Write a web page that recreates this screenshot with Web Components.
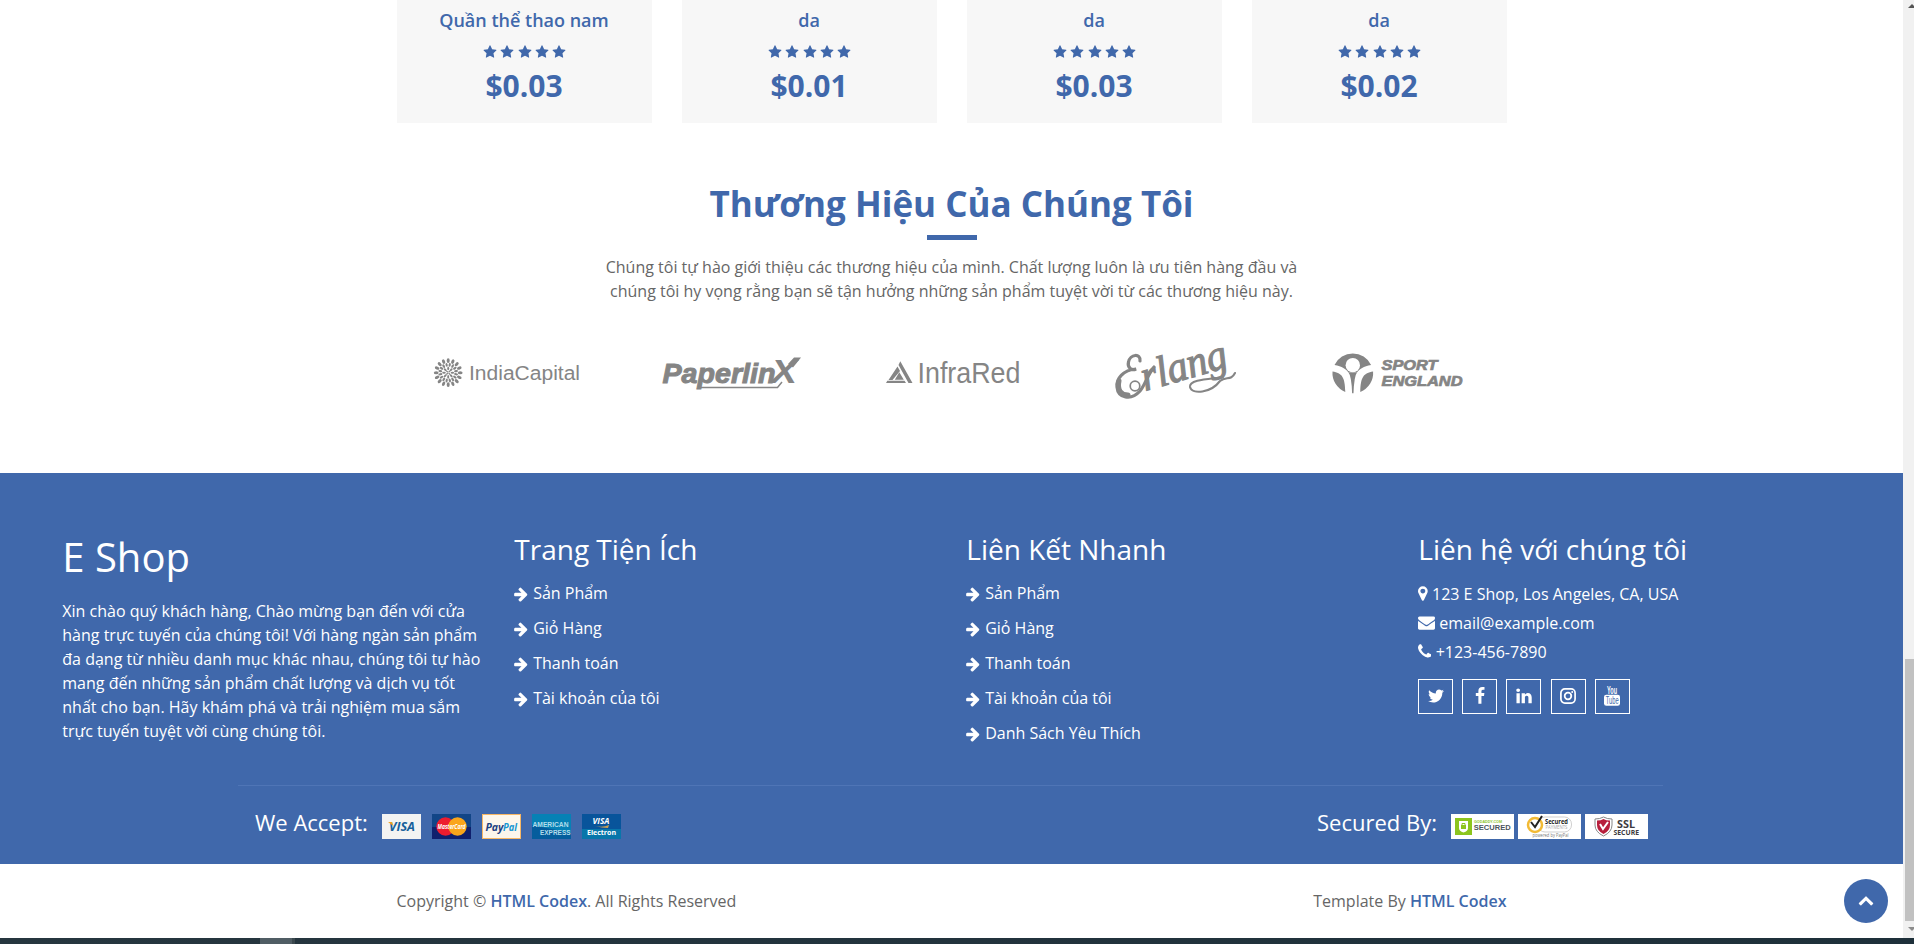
<!DOCTYPE html>
<html lang="vi">
<head>
<meta charset="utf-8">
<title>E Shop</title>
<style>
html,body{margin:0;height:944px;overflow:hidden;background:#fff}
body{font:400 16px/24px "Open Sans",sans-serif;color:#666;--blue:#4068ab}
</style>
</head>
<body>
<shop-window></shop-window>
<script>
const define=(name,html)=>customElements.define(name,class extends HTMLElement{
  connectedCallback(){
    if(this.shadowRoot)return;
    const root=this.attachShadow({mode:'open'});
    root.innerHTML=typeof html==='function'?html(this):html;
  }
});

const ICONS={
star:'M1728 647q0 22-26 48l-363 354 86 500q1 7 1 20 0 21-10.5 35.5t-30.500 14.500q-19 0-40-12l-449-236-449 236q-22 12-40 12-21 0-31.500-14.500t-10.500-35.500q0-6 2-20l86-500-364-354q-25-27-25-48 0-37 56-46l502-73 225-455q19-41 49-41t49 41l225 455 502 73q56 9 56 46z',
arrow:'M1664 960q0 54-37 91l-651 651q-39 37-91 37-51 0-90-37l-75-75q-38-38-38-91t38-91l293-293h-704q-52 0-84.500-37.500t-32.500-90.500v-128q0-53 32.500-90.500t84.500-37.500h704l-293-294q-38-36-38-90t38-90l75-75q38-38 90-38 53 0 91 38l651 651q37 35 37 90z',
marker:'M1152 640q0-106-75-181t-181-75-181 75-75 181 75 181 181 75 181-75 75-181zm256 0q0 109-33 179l-364 774q-16 33-47.500 52t-67.500 19-67.500-19-46.500-52l-365-774q-33-70-33-179 0-212 150-362t362-150 362 150 150 362z',
envelope:'M1792 710v794q0 66-47 113t-113 47h-1472q-66 0-113-47t-47-113v-794q44 49 101 87 362 246 497 345 57 42 92.500 65.500t94.500 48 110 24.500h2q51 0 110-24.500t94.500-48 92.500-65.500q170-123 498-345 57-39 100-87zm0-294q0 79-49 151t-122 123q-376 261-468 325-10 7-42.500 31t-54 38.500-52 32.500-57.500 27-50 9h-2q-23 0-50-9t-57.500-27-52-32.500-54-38.500-42.500-31q-91-64-262-182.500t-205-142.500q-62-42-117-115.500t-55-136.500q0-78 41.500-130t118.500-52h1472q65 0 112.500 47t47.500 113z',
phone:'M1600 1240q0 27-10 70.500t-21 68.500q-21 50-122 106-94 51-186 51-27 0-53-3.500t-57.500-12.500-47-14.500-55.500-20.500-49-18q-98-35-175-83-127-79-264-216t-216-264q-48-77-83-175-3-9-18-49t-20.500-55.500-14.500-47-12.500-57.500-3.500-53q0-92 51-186 56-101 106-122 25-11 68.500-21t70.500-10q14 0 21 3 18 6 53 76 11 19 30 54t35 63.500 31 53.500q3 4 17.500 25t21.500 35.500 7 28.500q0 20-28.500 50t-62 55-62 53-28.500 46q0 9 5 22.500t8.500 20.500 14 24 11.500 19q76 137 174 235t235 174q2 1 19 11.500t24 14 20.500 8.500 22.500 5q18 0 46-28.500t53-62 55-62 50-28.500q14 0 28.500 7t35.500 21.500 25 17.500q25 15 53.500 31t63.500 35 54 30q70 35 76 53 3 7 3 21z',
twitter:'M1684 408q-67 98-162 167 1 14 1 42 0 130-38 259.500t-115.500 248.500-184.500 210.500-258 146-323 54.500q-271 0-496-145 35 4 78 4 225 0 401-138-105-2-188-64.500t-114-159.500q33 5 61 5 43 0 85-11-112-23-185.500-111.500t-73.500-205.500v-4q68 38 146 41-66-44-105-115t-39-154q0-88 44-163 121 149 294.500 238.500t371.500 99.500q-8-38-8-74 0-134 94.500-228.500t228.500-94.500q140 0 236 102 109-21 205-78-37 115-142 178 93-10 186-50z',
facebook:'M1343 12v264h-157q-86 0-116 36t-30 108v189h293l-39 296h-254v759h-306v-759h-255v-296h255v-218q0-186 104-288.500t277-102.500q147 0 228 12z',
linkedin:'M477 625v991h-330v-991h330zm21-306q1 73-50.500 122t-135.500 49h-2q-82 0-132-49t-50-122q0-74 51.500-122.500t134.500-48.500 133 48.500 51 122.500zm1166 729v568h-329v-530q0-105-40.500-164.500t-126.500-59.500q-63 0-105.500 34.500t-63.500 85.500q-11 30-11 81v553h-329q2-399 2-647t-1-296l-1-48h329v144h-2q20-32 41-56t56.500-52 87-43.500 114.500-15.500q171 0 275 113.500t104 332.500z',
up:'M1683 1331l-166 165q-19 19-45 19t-45-19l-531-531-531 531q-19 19-45 19t-45-19l-166-165q-19-19-19-45.500t19-45.500l742-741q19-19 45-19t45 19l742 741q19 19 19 45.500t-19 45.500z'};
const BOX={marker:'384 0 1024 1792',phone:'192 0 1408 1792',arrow:'64 0 1664 1792'};

define('shop-icon',el=>{
  const n=el.getAttribute('name'),s=+el.getAttribute('size')||16;
  const css=`<style>:host{display:block;flex:none}svg{display:block;height:${n==='youtube'?20:s}px;fill:currentColor}</style>`;
  if(n==='instagram')return css+`<svg width="18" viewBox="0 0 18 18"><rect x="1.900" y="1.900" width="14.200" height="14.200" rx="4" fill="none" stroke="currentColor" stroke-width="1.700"/><circle cx="9" cy="9" r="3.300" fill="none" stroke="currentColor" stroke-width="1.800"/><circle cx="13.200" cy="4.900" r="1"/></svg>`;
  if(n==='youtube')return css+`<svg width="18" viewBox="0 0 18 20"><text x="4" y="8" font-family="Liberation Sans" font-weight="700" font-size="10" textLength="10" lengthAdjust="spacingAndGlyphs">You</text><rect x="1" y="8.800" width="16" height="11" rx="2.300"/><text x="2.800" y="17.700" fill="#4068ab" font-family="Liberation Sans" font-size="10" textLength="12.800" lengthAdjust="spacingAndGlyphs">Tube</text></svg>`;
  const vb=BOX[n]||'0 0 1792 1792';
  return css+`<svg width="${s*vb.split(' ')[2]/1792}" viewBox="${vb}"><path d="${ICONS[n]}"/></svg>`;
});

define('product-card',el=>`<style>
:host{display:flex;flex-direction:column;align-items:center;background:#f7f7f7;height:123px;color:var(--blue)}
h3{margin:9px 0 0;font:600 18px/22px "Open Sans"}
.stars{display:flex;gap:4.150px;margin-top:14px}
.price{font:700 30px/34px "Open Sans";margin-top:10px}
</style><h3><slot></slot></h3>
<div class="stars">${'<shop-icon name="star" size="14" style="width:13px"></shop-icon>'.repeat(5)}</div>
<div class="price">${el.getAttribute('price')}</div>`);

define('section-title',`<style>
:host{display:flex;flex-direction:column;align-items:center;text-align:center}
h2{margin:0;font:700 35px/44px "Open Sans";color:var(--blue);white-space:nowrap}
i{width:50px;height:5px;background:var(--blue);margin:9px 0 15px}
p{margin:0;white-space:nowrap}
</style><h2><slot name="title"></slot></h2><i></i><p><slot></slot></p>`);

const petals=(n,r,rx,ry,off=0)=>Array.from({length:n},(_,k)=>`<ellipse cx="51.200" cy="${39.7-r}" rx="${rx}" ry="${ry}" transform="rotate(${k*360/n+off} 51.200 39.700)"/>`).join('');
const LOGOS={
india:petals(16,12,1.5,2.4)+petals(16,8,1.1,2,11)+petals(8,4.2,1,1.8)+petals(4,1.6,.7,1.2,45)+
`<text x="72" y="47" font-size="19.500" textLength="111" lengthAdjust="spacingAndGlyphs">IndiaCapital</text>`,
paper:`<text x="43.500" y="50" font-size="28" font-weight="700" font-style="italic" stroke="#858585" stroke-width="1" textLength="113" lengthAdjust="spacingAndGlyphs">Paperlin</text>
<path d="M79 54.500H158.500L163 49" fill="none" stroke="#858585" stroke-width="1.500"/>
<text x="152" y="50" font-size="34" font-weight="700" font-style="italic" textLength="26" lengthAdjust="spacingAndGlyphs">X</text><path d="M169 31l6-6.500h7l-8 10z"/>`,
infra:`<path d="M59.300 28.300L71.500 50H67.500L57.500 32zM56.500 33.500L59 38 51.500 47H47.500zM58.300 39.200L62.800 46.800H53.800zM46.300 47.800H63.500L65 50H45z"/>
<text x="76.500" y="50" font-size="30" textLength="103" lengthAdjust="spacingAndGlyphs">InfraRed</text>`,
erlang:`<g transform="translate(82 58) rotate(-16)"><text x="0" y="0" font-family="Liberation Serif" font-size="43" font-style="italic" stroke="#858585" stroke-width="1.200" textLength="88" lengthAdjust="spacingAndGlyphs">rlang</text></g>
<g fill="none" stroke="#858585" stroke-linecap="round"><path d="M77 28C78 20 67 21 65.500 29C64 35 69 38 73 36C60 37 53 46 54 54C55 65 68 68 77 58C82 52 84 43 91 34" stroke-width="3.200"/><path d="M56 48C54 57 58 62 65 62" stroke-width="5"/><circle cx="72" cy="53" r="4.800" stroke-width="1.700"/><path d="M160 44C150 46 126 46 127 54C129 62 148 60 157 48C163 43 168 48 172 40" stroke-width="2.100"/></g>`,
sport:`<path d="M49.500 32A20.300 20.300 0 0 1 86.100 32C78.500 33.500 74.500 36 72 39.500H63.500C61 36 57 33.500 49.500 32z"/><circle cx="67.800" cy="32.200" r="7.200" fill="#fff"/><path d="M47.500 38.500C57 40 60 44 60.300 58.900A20.300 20.300 0 0 1 47.500 38.500zM88.100 38.500C78.600 40 75.600 44 75.300 58.900A20.300 20.300 0 0 0 88.100 38.500zM63.500 39.500Q66.500 43 67.100 60.300H68.500Q69.100 43 72 39.500z"/>
<g font-weight="700" font-style="italic" font-size="14.500" stroke="#858585" stroke-width=".7"><text x="96.500" y="37" textLength="56" lengthAdjust="spacingAndGlyphs">SPORT</text><text x="96.500" y="53" textLength="81" lengthAdjust="spacingAndGlyphs">ENGLAND</text></g>`};
define('brand-logo',el=>`<style>:host{display:block}svg{display:block;fill:#858585;font-family:"Liberation Sans"}</style><svg width="222" height="80" viewBox="0 0 222 80">${LOGOS[el.getAttribute('name')]}</svg>`);

define('footer-column',`<style>:host{display:block;width:452px;flex:none}
h2{margin:-1px 0 15px;font:400 28px/34px "Open Sans";white-space:nowrap}</style><h2><slot name="title"></slot></h2><slot></slot>`);
define('footer-link',`<style>:host{display:flex;align-items:center;height:24px;margin-bottom:11px;gap:5px}shop-icon{margin:1px 0 0 -1px}</style><shop-icon name="arrow" size="16"></shop-icon><slot></slot>`);
define('contact-line',el=>`<style>:host{display:flex;align-items:center;height:24px;margin-bottom:5px;gap:4.500px;padding-top:1px;box-sizing:border-box}shop-icon{margin-left:-.5px}</style><shop-icon name="${el.getAttribute('icon')}" size="17"></shop-icon><slot></slot>`);
define('social-link',el=>`<style>:host{display:flex;box-sizing:border-box;width:35px;height:35px;border:1px solid #fff;align-items:center;justify-content:center;padding-bottom:2px}</style><shop-icon name="${el.getAttribute('icon')}" size="18"></shop-icon>`);

const T=(x,y,s,w,fill,t,extra='')=>`<text x="${x}" y="${y}" font-size="${s}" textLength="${w}" lengthAdjust="spacingAndGlyphs" fill="${fill}" ${extra}>${t}</text>`;
const B='font-weight="700"',BI='font-weight="700" font-style="italic"';
const LB='font-weight="700" font-family="Liberation Sans"';
const BADGES={
visa:`<rect width="39" height="25" fill="#f3f3f2"/>${T(7,17,12.5,26,'#17609b','VISA',BI)}<path d="M6 8h4l1.500 4z" fill="#f0a21d"/>`,
master:`<rect width="39" height="25" fill="#124587"/><rect y="13" width="39" height="12" fill="#10206d"/><circle cx="13.500" cy="12.500" r="9.200" fill="#ed1c2e"/><circle cx="25.500" cy="12.500" r="9.200" fill="#f9a51b"/>${T(5.5,14.5,7,28,'#fff','MasterCard',BI)}`,
paypal:`<rect x=".5" y=".5" width="38" height="24" fill="#fcf6ec" stroke="#f7b765"/>${T(3.5,16.5,10.500,18,'#1c3f80','Pay',BI)}${T(21,16.500,10.500,14,'#1597d3','Pal',BI)}`,
amex:`<rect width="39" height="25" fill="#0681b5"/><path d="M0 25V11L39 19v6z" fill="#055d9d"/>${T(.5,12.500,8,36,'#b2ddeb','AMERICAN',LB)}${T(8,20.500,8,30.500,'#b2ddeb','EXPRESS',LB)}`,
electron:`<rect width="39" height="25" fill="#08549b"/><rect y="15" width="39" height="10" fill="#0876aa"/>${T(10.500,10,8,17,'#fff','VISA',BI)}<path d="M13 12q8 2 14-1l-1 3q-6 0-13-2z" fill="#c9a253"/>${T(5,21,7,29,'#fff','Electron',B)}`,
godaddy:`<rect width="63" height="25" fill="#fff"/><rect x="4" y="4" width="17" height="17" fill="#8cc51d"/><path d="M8 7h9v7q0 3-4.500 4.500Q8 17 8 14z" fill="#fff"/><rect x="10" y="11" width="5" height="4" fill="#8cc51d"/><path d="M11 11V9.500h3V11" fill="none" stroke="#8cc51d"/>${T(23,9,4.300,28,'#8cc51d','GODADDY.COM',LB)}${T(22.700,16.300,7.500,37,'#4b555c','SECURED',LB)}`,
norton:`<rect width="63" height="25" fill="#fff"/><rect x="20" y="3" width="33.500" height="15" rx="7" fill="#fff" stroke="#bbb" stroke-width=".7"/><circle cx="17" cy="11" r="7" fill="#fff" stroke="#f2ba35" stroke-width="2.500"/><path d="M13 8l4 5 7-11" fill="none" stroke="#222" stroke-width="2"/>${T(27,10,6.500,23,'#222','Secured',B)}${T(27.500,15.300,4.700,22,'#aaa','PAYMENTS')}${T(14.500,23.300,4.500,36,'#777','powered by PayPal')}`,
ssl:`<rect width="63" height="25" fill="#fff"/><path d="M10 5q5 0 8.500-2Q22 5 27 5v6q0 7-8.500 11Q10 18 10 11z" fill="#fff" stroke="#888"/><path d="M12 6.500q4 0 6.500-1.500Q21 6.500 25 6.500V11q0 6-6.500 9Q12 17 12 11z" fill="#b71f3c"/><path d="M15 10l3 5 5-7" fill="none" stroke="#fff" stroke-width="2"/>${T(32,14,11,18,'#3d3b40','SSL',B)}${T(28.500,20.500,6.500,25.500,'#3d3b40','SECURE',B)}`};
define('pay-badge',el=>{const n=el.getAttribute('name'),w=['godaddy','norton','ssl'].includes(n)?63:39;
return `<style>:host{display:block}svg{display:block;overflow:hidden;font-family:"Open Sans"}</style><svg width="${w}" height="25" viewBox="0 0 ${w} 25">${BADGES[n]}</svg>`});

define('scroll-rail',`<style>:host{display:flex;flex-direction:column;width:11px;height:938px;background:#f1f1f1;overflow:hidden}
svg{display:block;flex:none}i{margin:647px 0 0 2px;height:262px;background:#c1c1c1}</style>
<svg width="11" height="12"><path d="M5 8L9 4l4 4z" fill="#555"/></svg><i></i><svg width="11" height="17"><path d="M5 6h8l-4 4z" fill="#8c8c8c"/></svg>`);

define('shop-footer',`<style>
:host{display:block;height:391px;background:var(--blue);color:#fff;box-sizing:border-box;padding-top:60px}
.cols{display:flex;height:252px;padding-left:62.300px}
.about h1{margin:0 0 18px;font:400 40px/48px "Open Sans"}
.about{width:452px;flex:none}p{margin:0;white-space:nowrap}
.social{display:flex;gap:9.200px;margin:16px 0 0 -.3px}
.pay{width:1425px;margin:0 0 0 238px;border-top:1px solid #4f75b6;display:flex;justify-content:space-between;box-sizing:border-box;padding:22px 15px 0 17px}
.pay>div{display:flex;align-items:flex-start}
h3{margin:0;font:400 22px/28px "Open Sans";white-space:nowrap}
pay-badge{margin-top:6px}
</style>
<div class="cols">
<div class="about"><h1>E Shop</h1><p>Xin chào quý khách hàng, Chào mừng bạn đến với cửa<br>hàng trực tuyến của chúng tôi! Với hàng ngàn sản phẩm<br>đa dạng từ nhiều danh mục khác nhau, chúng tôi tự hào<br>mang đến những sản phẩm chất lượng và dịch vụ tốt<br>nhất cho bạn. Hãy khám phá và trải nghiệm mua sắm<br>trực tuyến tuyệt vời cùng chúng tôi.</p></div>
<footer-column><span slot="title">Trang Tiện Ích</span><footer-link>Sản Phẩm</footer-link><footer-link>Giỏ Hàng</footer-link><footer-link>Thanh toán</footer-link><footer-link>Tài khoản của tôi</footer-link></footer-column>
<footer-column><span slot="title">Liên Kết Nhanh</span><footer-link>Sản Phẩm</footer-link><footer-link>Giỏ Hàng</footer-link><footer-link>Thanh toán</footer-link><footer-link>Tài khoản của tôi</footer-link><footer-link>Danh Sách Yêu Thích</footer-link></footer-column>
<footer-column><span slot="title">Liên hệ với chúng tôi</span><contact-line icon="marker">123 E Shop, Los Angeles, CA, USA</contact-line><contact-line icon="envelope">email@example.com</contact-line><contact-line icon="phone">+123-456-7890</contact-line>
<div class="social"><social-link icon="twitter"></social-link><social-link icon="facebook"></social-link><social-link icon="linkedin"></social-link><social-link icon="instagram"></social-link><social-link icon="youtube"></social-link></div></footer-column>
</div>
<div class="pay"><div style="gap:11px"><h3 style="margin-right:3px">We Accept:</h3><pay-badge name="visa"></pay-badge><pay-badge name="master"></pay-badge><pay-badge name="paypal"></pay-badge><pay-badge name="amex"></pay-badge><pay-badge name="electron"></pay-badge></div>
<div style="gap:4px"><h3 style="margin-right:10px">Secured By:</h3><pay-badge name="godaddy"></pay-badge><pay-badge name="norton"></pay-badge><pay-badge name="ssl"></pay-badge></div></div>`);

define('shop-window',`<style>
:host{display:grid;grid-template:938px 6px/1903px 11px;width:1914px;height:944px}
main{position:relative;overflow:hidden}
.cards{display:grid;grid-template-columns:repeat(4,255px);gap:30px;width:1110px;margin:0 auto}
section-title{margin-top:59px}
.brands{display:flex;width:1110px;margin:30px auto 60px}
.copy{display:flex;justify-content:space-between;width:1110px;margin:25px auto 0}
b{font-weight:600;color:var(--blue)}
.top{position:absolute;right:15px;bottom:15px;width:44px;height:44px;border-radius:50%;background:var(--blue);color:#fff;display:flex;align-items:center;justify-content:center;box-sizing:border-box;padding-bottom:2px}
.bar{grid-column:1/3;display:flex;background:linear-gradient(90deg,#26363f,#1e303a)}
.bar i{width:32px;margin-left:260px;background:#505d64;border-right:3px solid #3b484e}
</style>
<main>
<div class="cards"><product-card price="$0.03">Quần thể thao nam</product-card><product-card price="$0.01">da</product-card><product-card price="$0.03">da</product-card><product-card price="$0.02">da</product-card></div>
<section-title><span slot="title">Thương Hiệu Của Chúng Tôi</span>Chúng tôi tự hào giới thiệu các thương hiệu của mình. Chất lượng luôn là ưu tiên hàng đầu và<br>chúng tôi hy vọng rằng bạn sẽ tận hưởng những sản phẩm tuyệt vời từ các thương hiệu này.</section-title>
<div class="brands"><brand-logo name="india"></brand-logo><brand-logo name="paper"></brand-logo><brand-logo name="infra"></brand-logo><brand-logo name="erlang"></brand-logo><brand-logo name="sport"></brand-logo></div>
<shop-footer></shop-footer>
<div class="copy"><span>Copyright © <b>HTML Codex</b>. All Rights Reserved</span><span>Template By <b>HTML Codex</b></span></div>
<div class="top"><shop-icon name="up" size="16"></shop-icon></div>
</main>
<scroll-rail></scroll-rail>
<div class="bar"><i></i></div>`);
</script>
</body>
</html>
